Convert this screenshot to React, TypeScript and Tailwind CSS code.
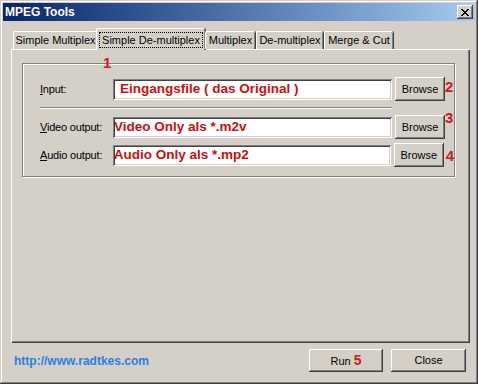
import React from "react";

const raised =
	"bg-[#d4d0c8] shadow-[inset_-1px_-1px_#404040,inset_1px_1px_#ffffff,inset_-2px_-2px_#808080,inset_2px_2px_#d4d0c8]";
const sunken =
	"bg-white shadow-[inset_1px_1px_#808080,inset_-1px_-1px_#ffffff,inset_2px_2px_#404040,inset_-2px_-2px_#d4d0c8]";

const Num = ({ n, className = "" }: { n: string; className?: string }) => (
	<span className={`text-[15px] font-bold leading-none text-[#d01818] ${className}`}>{n}</span>
);

const Row = ({
	label,
	hotkey,
	value,
	num,
	numClass,
	textPad,
}: {
	label: string;
	hotkey: string;
	value: string;
	num: string;
	numClass: string;
	textPad: string;
}) => (
	<div className="flex h-[24px] items-center">
		<span className="w-[73px] text-[11px] tracking-[-0.2px] text-black">
			<u>{hotkey}</u>
			{label}
		</span>
		<div className={`flex h-[21px] w-[279px] items-center ${sunken} ${textPad}`}>
			<span className="text-[13.5px] font-bold text-[#c81010]">{value}</span>
		</div>
		<button className={`ml-[3px] h-[24px] w-[50px] text-[11px] text-black ${raised}`}>Browse</button>
		<Num n={num} className={numClass} />
	</div>
);

const Tab = ({ text, width }: { text: string; width: string }) => (
	<div
		className={`flex h-[18px] items-center justify-center border-l border-t border-white shadow-[inset_-1px_0_#808080,1px_0_#404040] rounded-t-[2px] text-[11px] text-black ${width}`}
	>
		{text}
	</div>
);

export default function App() {
	return (
		<div
			className="flex h-[384px] w-[478px] flex-col bg-[#d4d0c8] p-[3px] shadow-[inset_-1px_-1px_#404040,inset_1px_1px_#d4d0c8,inset_-2px_-2px_#808080,inset_2px_2px_#ffffff]"
			style={{ fontFamily: '"Liberation Sans", Arial, sans-serif' }}
		>
			{/* title bar */}
			<div className="flex h-[18px] items-center justify-between bg-gradient-to-r from-[#0a246a] to-[#a6caf0] pl-[2px] pr-[2px]">
				<span className="text-[12px] font-bold text-white">MPEG Tools</span>
				<div className={`flex h-[14px] w-[16px] items-center justify-center ${raised}`}>
					<svg width="8" height="7" viewBox="0 0 8 7">
						<path d="M0 0L7 7M1 0L8 7M7 0L0 7M8 0L1 7" stroke="#000" strokeWidth="1" />
					</svg>
				</div>
			</div>

			<div className="flex flex-1 flex-col px-[8px] pt-[8px]">
				{/* tabs */}
				<div className="relative z-10 ml-[2px] flex h-[20px] items-end">
					<Tab text="Simple Multiplex" width="w-[84px]" />
					<div className="-mb-px -mx-[1px] flex h-[22px] w-[109px] items-center justify-center border-l border-t border-white bg-[#d4d0c8] shadow-[inset_-1px_0_#808080,1px_0_#404040] rounded-t-[2px]">
						<span className="border border-dotted border-black px-[2px] text-[11px] leading-[14px] text-black">
							Simple De-multiplex
						</span>
					</div>
					<Tab text="Multiplex" width="w-[50px] ml-[1px]" />
					<Tab text="De-multiplex" width="w-[67px] ml-[1px]" />
					<Tab text="Merge & Cut" width="w-[69px] ml-[1px]" />
				</div>

				{/* panel */}
				<div className="h-[293px] w-[458px] border-l border-t border-white shadow-[inset_-1px_-1px_#808080,1px_1px_#404040]">
					<div className="relative ml-[10px] mt-[13px] h-[114px] w-[433px] border border-[#808080] pl-[17px] pt-[13px] shadow-[1px_1px_#ffffff,inset_1px_1px_#ffffff]">
						<Num n="1" className="absolute left-[80px] top-[-9px]" />
						<Row
							hotkey="I"
							label="nput:"
							value="Eingangsfile ( das Original )"
							num="2"
							numClass="self-start mt-[2px]"
							textPad="pl-[7px]"
						/>
						<div className="mt-[6px] w-[352px] border-b border-t border-b-white border-t-[#808080]" />
						<div className="mt-[6px]">
							<Row
								hotkey="V"
								label="ideo output:"
								value="Video Only als *.m2v"
								num="3"
								numClass="self-start -mt-[5px]"
								textPad="pl-[1px]"
							/>
						</div>
						<div className="mt-[4px]">
							<Row
								hotkey="A"
								label="udio output:"
								value="Audio Only als *.mp2"
								num="4"
								numClass="ml-[2px]"
								textPad="pl-[1px]"
							/>
						</div>
					</div>
				</div>

				{/* bottom row */}
				<div className="mt-[7px] flex h-[23px] items-center justify-between pr-[1px]">
					<span className="ml-[3px] text-[12px] font-bold text-[#2a80e0]">http://www.radtkes.com</span>
					<div className="flex gap-[8px]">
						<button className={`h-[23px] w-[74px] text-[11px] text-black ${raised}`}>
							Run <span className="text-[14px] font-bold text-[#d01818]">5</span>
						</button>
						<button className={`h-[23px] w-[75px] text-[11px] text-black ${raised}`}>Close</button>
					</div>
				</div>
			</div>
		</div>
	);
}
